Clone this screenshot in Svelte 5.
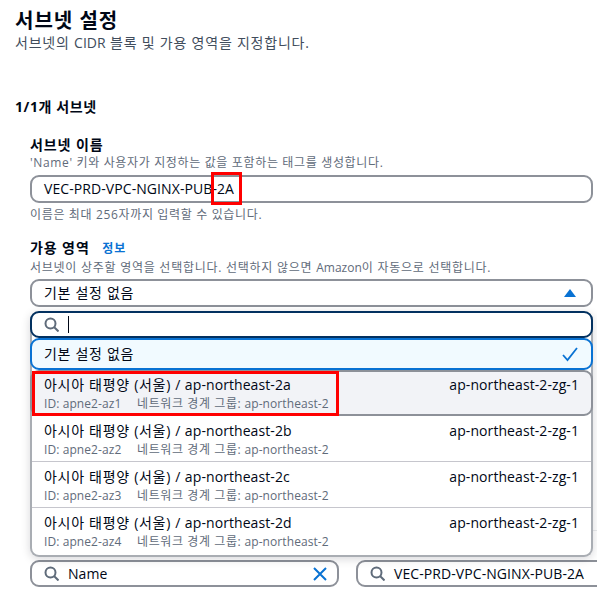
<script lang="ts">
  const zones = [
    { name: "ap-northeast-2a", id: "apne2-az1", hover: true },
    { name: "ap-northeast-2b", id: "apne2-az2" },
    { name: "ap-northeast-2c", id: "apne2-az3" },
    { name: "ap-northeast-2d", id: "apne2-az4" },
  ];
</script>

{#snippet search()}
  <svg class="mag" viewBox="0 0 15 15" width="15" height="15" fill="none">
    <circle cx="6.5" cy="6.5" r="5" />
    <path d="M10 10 14.5 14.5" />
  </svg>
{/snippet}

<main class="page">
  <header class="head">
    <h1>서브넷 설정</h1>
    <p>서브넷의 <span class="en">CIDR</span> 블록 및 가용 영역을 지정합니다.</p>
  </header>

  <h2>1/1개 서브넷</h2>

  <section class="subnet">
    <div class="field">
      <div class="label">서브넷 이름</div>
      <div class="hint">'Name' 키와 사용자가 지정하는 값을 포함하는 태그를 생성합니다.</div>
      <div class="input name-input">
        <span class="name-val">VEC-PRD-VPC-NGINX-PUB-2A<span class="mark"></span></span>
      </div>
      <div class="hint after">이름은 최대 256자까지 입력할 수 있습니다.</div>
    </div>

    <div class="field az">
      <div class="label">가용 영역 <a href="#info">정보</a></div>
      <div class="hint">서브넷이 상주할 영역을 선택합니다. 선택하지 않으면 <span class="en">Amazon</span>이 자동으로 선택합니다.</div>
      <div class="input select">
        <span class="ko">기본 설정 없음</span>
        <svg viewBox="0 0 12 8" width="12" height="8"><path d="M6 0 12 8H0z" fill="#0972d3" /></svg>
      </div>

      <div class="dropdown">
        <div class="input finder">
          {@render search()}
          <span class="caret"></span>
        </div>
        <div class="opt selected">
          <span class="ko">기본 설정 없음</span>
          <svg viewBox="0 0 16 16" width="16" height="16" fill="none">
            <path d="M1 9 5.5 14 15 2" stroke="#0972d3" stroke-width="1.8" />
          </svg>
        </div>
        {#each zones as z}
          <div class="opt zone" class:hover={z.hover}>
            <div class="line">
              <span><span class="ko">아시아 태평양 (서울) /</span> {z.name}</span>
              <span>ap-northeast-2-zg-1</span>
            </div>
            <div class="sub">
              <span class="id">ID: {z.id}</span>
              <span><span class="ko">네트워크 경계 그룹:</span> ap-northeast-2</span>
            </div>
            {#if z.hover}<span class="mark zone-mark"></span>{/if}
          </div>
        {/each}
      </div>

      <div class="filters">
        <div class="input filter">
          {@render search()}
          <span class="grow">Name</span>
          <svg class="clear" viewBox="0 0 14 14" width="14" height="14" fill="none">
            <path d="M1 1 13 13M13 1 1 13" stroke="#0972d3" stroke-width="2" />
          </svg>
        </div>
        <div class="input filter value">
          {@render search()}
          <span>VEC-PRD-VPC-NGINX-PUB-2A</span>
        </div>
      </div>
    </div>
  </section>
  <span class="rule"></span>
</main>

<style>
  :global(body) {
    margin: 0;
    background: #fff;
    overflow: hidden;
  }
  .page {
    position: relative;
    width: 597px;
    height: 601px;
    overflow: hidden;
    box-sizing: border-box;
    padding: 8px 0 0 15px;
    color: #000716;
    font-family: "Open Sans", "Noto Sans CJK KR", sans-serif;
    font-size: 14px;
    line-height: 20px;
    letter-spacing: 0.08px;
  }
  .en {
    letter-spacing: 0;
  }
  .ko {
    letter-spacing: 0.7px;
  }
  .head h1 {
    margin: 0;
    font-size: 20px;
    line-height: 26px;
    font-weight: 700;
    letter-spacing: 1px;
  }
  .head p {
    margin: -1px 0 0;
    color: #414d5c;
    font-size: 14px;
    letter-spacing: 0.78px;
  }
  h2 {
    margin: 44px 0 0;
    font-size: 14px;
    line-height: 20px;
    font-weight: 700;
    letter-spacing: 0.6px;
  }
  .subnet {
    margin-top: 18px;
    padding-left: 15px;
  }
  .label {
    font-weight: 700;
    font-size: 14px;
    line-height: 20px;
    letter-spacing: 0.9px;
  }
  .label a {
    margin-left: 8px;
    color: #0972d3;
    font-size: 12px;
    letter-spacing: 1px;
    text-decoration: none;
  }
  .hint {
    color: #5f6b7a;
    font-size: 12px;
    line-height: 16px;
    letter-spacing: 0.65px;
  }
  .hint.after {
    margin-top: 4px;
  }
  .az {
    margin-top: 15px;
  }
  .az .hint {
    margin-top: 1px;
    letter-spacing: 0.74px;
  }
  .input {
    display: flex;
    align-items: center;
    box-sizing: border-box;
    height: 28px;
    border: 2px solid #8d9199;
    border-radius: 9px;
    padding: 0 12px;
    background: #fff;
  }
  .name-input {
    width: 563px;
    margin-top: 4px;
  }
  .name-val {
    position: relative;
  }
  .mark {
    position: absolute;
    border: 3px solid #f00;
    pointer-events: none;
  }
  .name-val .mark {
    right: -8px;
    top: -7px;
    width: 25px;
    height: 27px;
  }
  .select {
    width: 563px;
    margin-top: 3px;
    justify-content: space-between;
    padding-right: 15px;
  }
  .dropdown {
    position: relative;
    z-index: 1;
    width: 563px;
    margin-top: 4px;
    box-sizing: border-box;
    border-radius: 9px;
    box-shadow: 0 2px 10px rgba(0, 7, 22, 0.16);
    border: solid #a9adb3;
    border-width: 0 2px 2px;
    background: #fff;
  }
  .finder {
    width: 563px;
    height: 27px;
    margin: 0 -2px;
    border-color: #033160;
    gap: 9px;
  }
  .caret {
    width: 1px;
    height: 17px;
    background: #000716;
  }
  .mag circle,
  .mag path {
    stroke: #5f6b7a;
    stroke-width: 2;
  }
  .opt {
    position: relative;
    box-sizing: border-box;
    padding: 0 12px;
  }
  .selected {
    display: flex;
    align-items: center;
    justify-content: space-between;
    height: 32px;
    margin: 0 -2px;
    padding-right: 13px;
    border: 2px solid #0972d3;
    border-radius: 9px;
    background: #f1faff;
  }
  .zone {
    height: 46px;
    padding-top: 5px;
    border-bottom: 1px solid #c6c6cd;
  }
  .zone:last-child {
    border-bottom: 0;
    height: 47px;
  }
  .zone.hover {
    margin: 0 -2px;
    padding: 3px 12px 0;
    background: #f2f3f7;
    border: 2px solid #8d9199;
    border-radius: 9px;
  }
  .line {
    display: flex;
    justify-content: space-between;
  }
  .sub {
    display: flex;
    gap: 17px;
    color: #5f6b7a;
    font-size: 12px;
    line-height: 16px;
    margin-top: 1px;
  }
  .sub .ko {
    letter-spacing: 0.6px;
  }
  .sub .id {
    width: 76px;
    white-space: nowrap;
  }
  .zone-mark {
    left: 0;
    top: -1px;
    width: 301px;
    height: 39px;
  }
  .filters {
    display: flex;
    gap: 17px;
    width: 600px;
    margin-top: 3px;
  }
  .filter {
    flex: none;
    width: 309px;
    height: 27px;
    gap: 9px;
  }
  .filter.value {
    width: 260px;
  }
  .grow {
    flex: 1;
  }
  .clear {
    margin-right: -2px;
  }
  .rule {
    position: absolute;
    left: 590px;
    right: 0;
    top: 530px;
    height: 1px;
    background: #e9ebed;
  }
</style>
